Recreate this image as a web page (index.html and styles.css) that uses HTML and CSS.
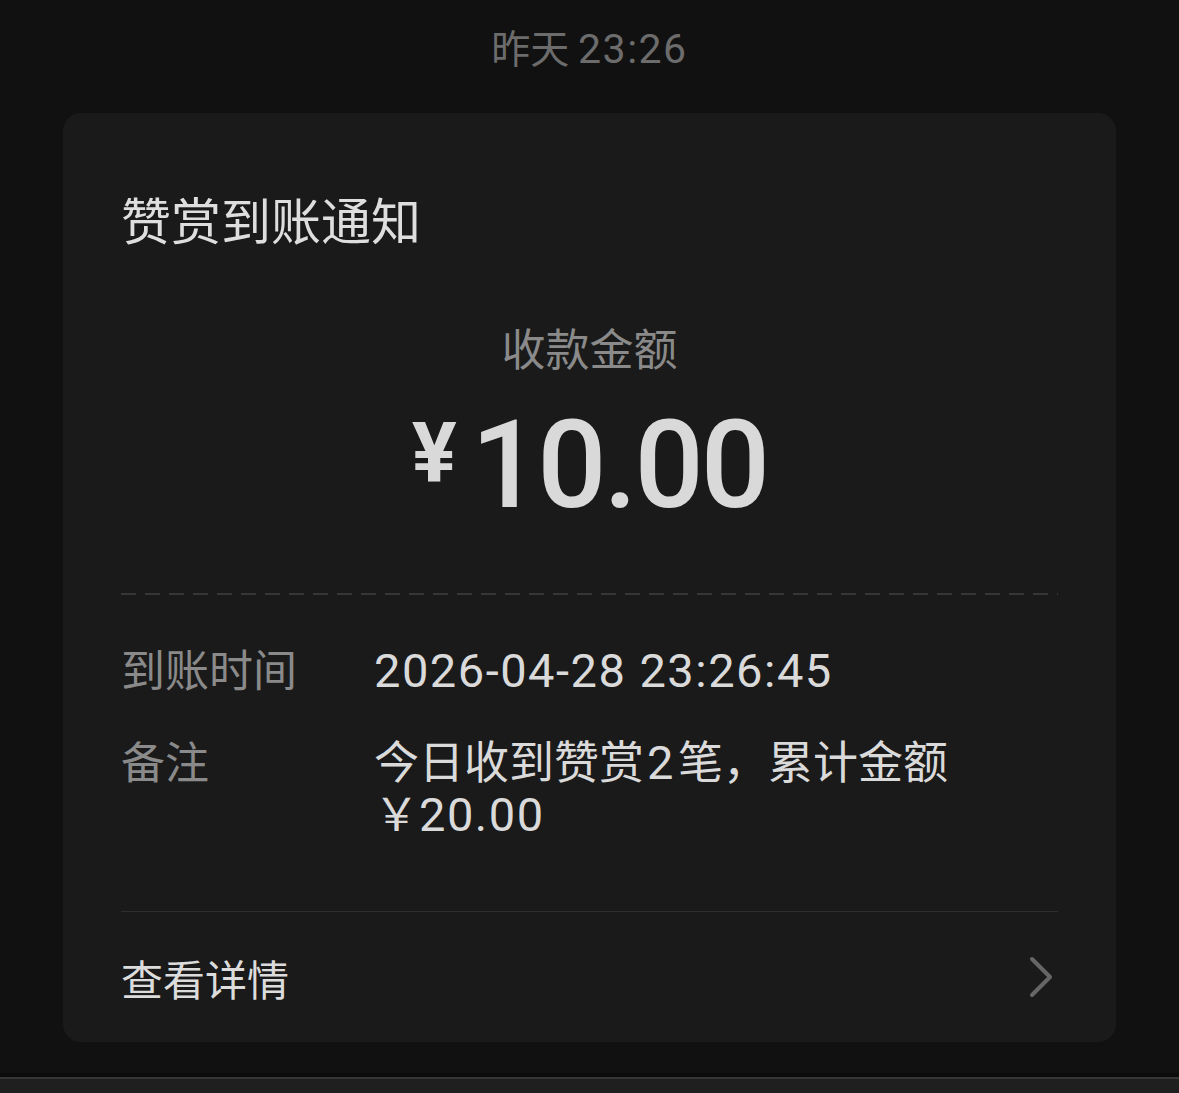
FILE: index.html
```html
<!DOCTYPE html>
<html lang="zh-CN">
    <head>
        <meta charset="utf-8">
        <title>赞赏到账通知</title>
        <link rel="stylesheet" href="styles.css">
    </head>
    <body>
        <div class="time">昨天 <span class="tnum">23:26</span></div>
        <div class="card">
            <div class="title">赞赏到账通知</div>
            <div class="label-center">收款金额</div>
            <div class="amount"><span class="yen">¥</span>10.00</div>
            <div class="dashed"></div>
            <div class="rows">
                <div class="row">
                    <div class="key">到账时间</div>
                    <div class="val"><span class="num">2026-04-28 23:26:45</span></div>
                </div>
                <div class="row row-note">
                    <div class="key">备注</div>
                    <div class="val">
                        <div>今日收到赞赏<span class="num cnt">2</span>笔，累计金额</div>
                        <div>￥<span class="num">20.00</span></div>
                    </div>
                </div>
            </div>
            <div class="solid"></div>
            <div class="more">
                <span>查看详情</span>
                <svg class="chev" width="24" height="42" viewBox="0 0 24 42">
                    <polyline points="3,3 21,21 3,39" fill="none" stroke="#666" stroke-width="4" stroke-linecap="round" stroke-linejoin="round"/>
                </svg>
            </div>
        </div>
        <div class="edge"></div>
        <div class="bar"></div>
    </body>
</html>
```

FILE: styles.css
```css
body {
    margin: 0;
    background: #111111;
    width: 1179px;
    height: 1093px;
    overflow: hidden;
    font-family: "Noto Sans CJK SC", "Noto Sans", sans-serif;
    color: #dadada;
}
.time {
    padding-top: 25px;
    line-height: 42px;
    height: 42px;
    font-size: 39px;
    text-align: center;
    color: #6c6c6c;
}
.tnum {
    font-family: Roboto, sans-serif;
    font-size: 41px;
    line-height: 1;
    letter-spacing: 1.5px;
}
.card {
    margin: 46px 63px 0;
    height: 929px;
    box-sizing: border-box;
    padding: 75px 58px 0;
    background: #1a1a1a;
    border-radius: 18px;
}
.title {
    font-size: 50px;
    line-height: 60px;
    color: #dedede;
}
.label-center {
    margin-top: 74px;
    font-size: 44px;
    line-height: 50px;
    text-align: center;
    color: #8a8a8a;
}
.amount {
    margin-top: 29px;
    height: 130px;
    font-family: Roboto, "Noto Sans", sans-serif;
    font-weight: 500;
    font-size: 122px;
    letter-spacing: -3px;
    line-height: 130px;
    text-align: center;
    color: #d9d9d9;
}
.yen {
    font-size: 84px;
    line-height: 84px;
    font-weight: 700;
    letter-spacing: 0;
    vertical-align: 25px;
    margin-right: 14px;
}
.dashed {
    margin-top: 62px;
    height: 2px;
    background: repeating-linear-gradient(to right, #363636 0 15px, transparent 15px 24px);
}
.rows {
    padding-top: 47px;
}
.row {
    display: grid;
    grid-template-columns: 253px 1fr;
    font-size: 44px;
    line-height: 52px;
}
.row-note {
    margin-top: 40px;
}
.key {
    color: #8a8a8a;
}
.val {
    font-size: 45px;
    color: #dadada;
}
.num {
    font-family: Roboto, sans-serif;
    font-size: 47px;
    line-height: 1;
    letter-spacing: 1.5px;
}
.cnt {
    margin: 0 3px;
}
.solid {
    margin-top: 73px;
    height: 1px;
    background: #2e2e2e;
}
.more {
    height: 130px;
    display: flex;
    align-items: center;
    justify-content: space-between;
    font-size: 42px;
    color: #dcdcdc;
}
.chev {
    margin-right: 5px;
}
.edge {
    margin-top: 31px;
    height: 4px;
    background: #0c0c0c;
}
.bar {
    height: 16px;
    border-top: 2px solid #363636;
    background: #1f1f1f;
}
```
